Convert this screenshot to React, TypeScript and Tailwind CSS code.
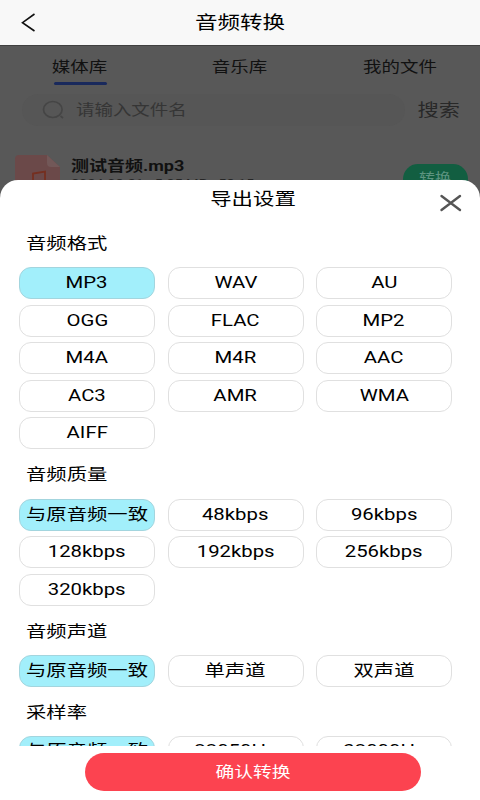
import { useState } from "react";

interface Section {
    title: string;
    options: string[];
}

const sections: Section[] = [
    {
        title: "音频格式",
        options: ["MP3", "WAV", "AU", "OGG", "FLAC", "MP2", "M4A", "M4R", "AAC", "AC3", "AMR", "WMA", "AIFF"],
    },
    {
        title: "音频质量",
        options: ["与原音频一致", "48kbps", "96kbps", "128kbps", "192kbps", "256kbps", "320kbps"],
    },
    { title: "音频声道", options: ["与原音频一致", "单声道", "双声道"] },
    { title: "采样率", options: ["与原音频一致", "22050Hz", "32000Hz"] },
];

// File browser page, dimmed behind the sheet
function Library() {
    return (
        <div className="h-[155px] bg-[#585858] border-t border-[#404040] text-[#111]">
            <div className="flex h-[40px]">
                {["媒体库", "音乐库", "我的文件"].map((tab, i) => (
                    <div key={tab} className="w-[160px] flex flex-col items-center pt-[9px]">
                        <span className="text-[15px] leading-6 scale-x-[1.23]">{tab}</span>
                        {i === 0 && <span className="w-[53px] h-[3px] mt-[3px] rounded-full bg-[#19295c]" />}
                    </div>
                ))}
            </div>
            <div className="flex items-center h-[48px] pl-[22px] pr-[20px]">
                <div className="flex items-center w-[383px] h-[32px] rounded-full bg-[#565656] pl-[20px]">
                    <svg width="24" height="20" viewBox="0 0 24 20" fill="none" stroke="#454545" strokeWidth="1.7">
                        <ellipse cx="10.8" cy="9.5" rx="9.3" ry="8" />
                        <path d="M18.5 16L21 18" />
                    </svg>
                    <span className="origin-left scale-x-[1.23] ml-[10px] text-[15px] text-[#353535]">请输入文件名</span>
                </div>
                <span className="ml-auto mt-px origin-right scale-x-[1.25] text-[17px] text-[#282828]">搜索</span>
            </div>
            <div className="flex pl-[15px] pt-[21px]">
                <svg width="46" height="46" viewBox="0 0 46 46" fill="none">
                    <path d="M4 0H32L45 12V46H0V4Q0 0 4 0Z" fill="#6b4949" />
                    <path d="M32 0L45 12H36Q32 12 32 8Z" fill="#725858" />
                    <path d="M18 34V18.5L30 16.5V32" stroke="#752f20" strokeWidth="1.8" />
                </svg>
                <div className="ml-[9.5px] w-[200px] origin-left scale-x-[1.2]">
                    <div className="text-[15px] leading-[23px] font-bold">测试音频.mp3</div>
                    <div className="text-[12px] leading-[12px] text-[#262626] whitespace-pre">2024-08-21   5.25 MB   58:15</div>
                </div>
                <div className="ml-auto mr-[12px] mt-[9px] w-[65px] h-[30px] rounded-full bg-[#125e41] text-center text-[13px] leading-[28px] text-[#5d9480]">
                    <span className="inline-block scale-x-[1.23]">转换</span>
                </div>
            </div>
        </div>
    );
}

export default function App() {
    const [selected, setSelected] = useState<number[]>([0, 0, 0, 0]);

    const choose = (section: number, option: number) => {
        setSelected(selected.map((value, i) => (i === section ? option : value)));
    };

    return (
        <div className="w-[480px] h-[800px] overflow-hidden flex flex-col bg-[#585858] font-['Roboto','Noto_Sans_CJK_SC',sans-serif] text-black">
            <header className="relative h-[45px] shrink-0 bg-[#f8f8f8] flex items-center justify-center">
                <svg className="absolute left-[21px] top-[13px]" width="15" height="20" viewBox="0 0 15 20" fill="none" stroke="#111" strokeWidth="1.6">
                    <path d="M13.5 1L1.5 9.7L13.5 18" />
                </svg>
                <h1 className="text-[18px] scale-x-[1.25]">音频转换</h1>
            </header>

            <Library />

            {/* Export settings sheet */}
            <div className="relative -mt-[20px] h-[620px] shrink-0 rounded-t-[18px] bg-white flex flex-col">
                <div className="h-[42px] shrink-0 text-center pl-[25px]">
                    <h2 className="inline-block text-[17px] leading-[38px] scale-x-[1.26]">导出设置</h2>
                </div>
                <button className="absolute left-[439px] top-[14px]">
                    <svg width="24" height="18" viewBox="0 0 24 18" fill="none" stroke="#555" strokeWidth="2.4" strokeLinecap="round">
                        <path d="M2.5 2L21 16M21 2L2.5 16" />
                    </svg>
                </button>

                <div className="h-[524px] shrink-0 overflow-hidden pl-[19px] pr-[28px]">
                    {sections.map((section, s) => (
                        <section key={section.title}>
                            <h3
                                className={`pl-[7px] text-[16px] ${
                                    s === 0 ? "h-[49.6px] -mt-[4.6px] leading-[54px]" : s === 3 ? "h-[49px] leading-[52px]" : "h-[49.6px] leading-[52px]"
                                }`}
                            >
                                <span className="inline-block origin-left scale-x-[1.27]">{section.title}</span>
                            </h3>
                            <div className="grid grid-cols-3 gap-x-[12.5px] gap-y-[5.5px]">
                                {section.options.map((option, o) => (
                                    <button
                                        key={option}
                                        onClick={() => choose(s, o)}
                                        className={`h-[32px] rounded-[12px] border text-[16px] whitespace-nowrap ${
                                            s === 3 ? "leading-[28px] pb-[2px]" : "leading-[30px]"
                                        } ${selected[s] === o ? "bg-[#a2effb] border-[#a3d5de]" : "bg-white border-[#e0e0e0]"}`}
                                    >
                                        <span className="inline-block scale-x-[1.27]">{option}</span>
                                    </button>
                                ))}
                            </div>
                        </section>
                    ))}
                </div>

                <button className="ml-[85px] mt-[7px] w-[336px] h-[38px] rounded-full bg-[#fc4350] text-[15px] text-white">
                    <span className="inline-block scale-x-[1.25]">确认转换</span>
                </button>
            </div>
        </div>
    );
}
